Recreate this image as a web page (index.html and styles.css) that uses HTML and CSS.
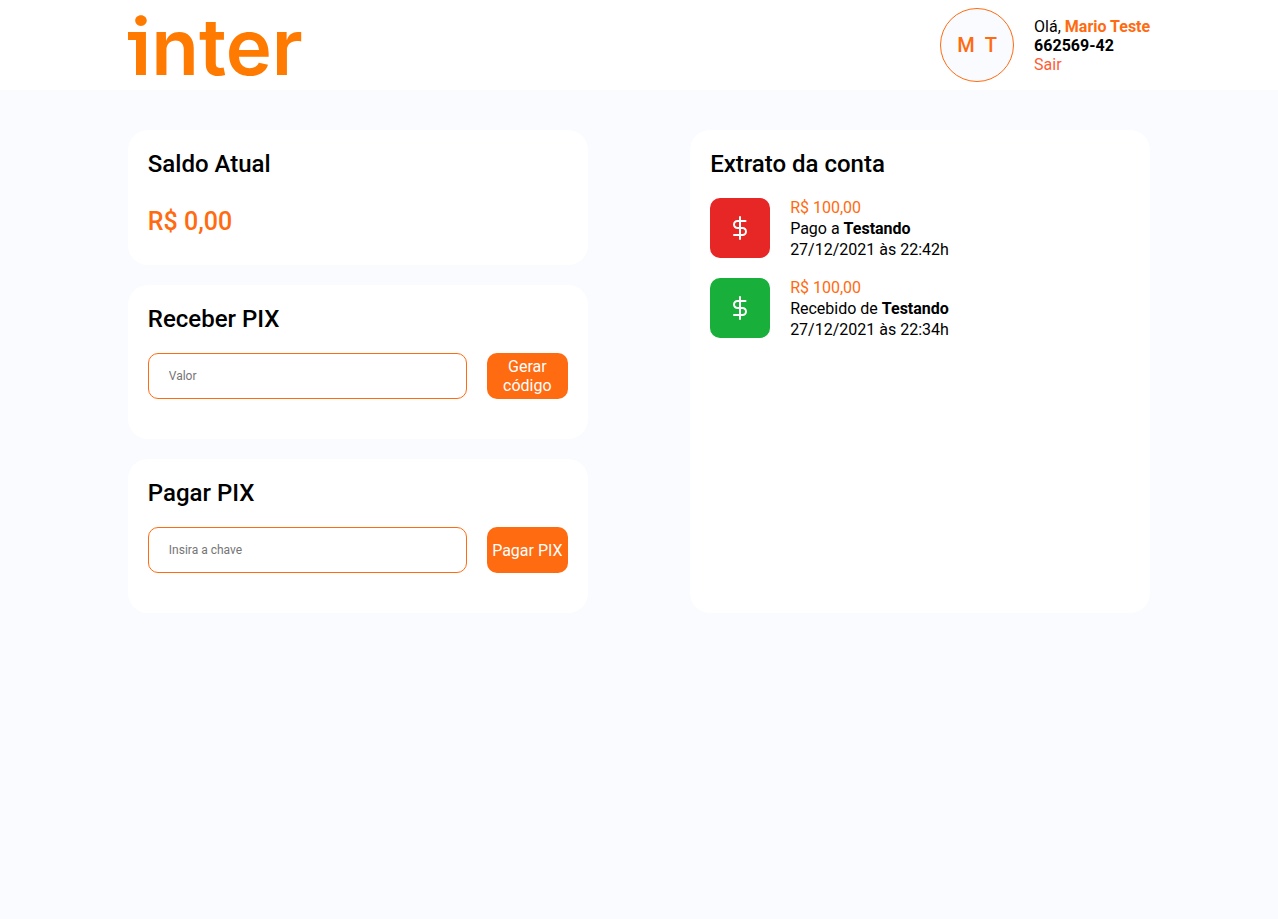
FILE: index.html
```html
<!DOCTYPE html>
<html lang="pt-BR">
<head>
<meta charset="utf-8">
<meta name="viewport" content="width=device-width, initial-scale=1">
<title>Inter</title>
<link rel="stylesheet" href="styles.css">
</head>
<body>
<header class="header">
  <div class="wrapper header-content">
    <div class="logo">inter</div>
    <div class="user">
      <div class="avatar"><span>M</span><span>T</span></div>
      <div class="user-info">
        <p>Olá, <strong class="accent">Mario Teste</strong></p>
        <strong>662569-42</strong>
        <a href="#sair">Sair</a>
      </div>
    </div>
  </div>
</header>
<main class="wrapper dashboard">
  <div class="column">
    <section class="card">
      <h2>Saldo Atual</h2>
      <p class="balance">R$ 0,00</p>
    </section>
    <section class="card">
      <h2>Receber PIX</h2>
      <form class="pix-form">
        <input type="text" placeholder="Valor" aria-label="Valor">
        <button type="button">Gerar código</button>
      </form>
    </section>
    <section class="card">
      <h2>Pagar PIX</h2>
      <form class="pix-form">
        <input type="text" placeholder="Insira a chave" aria-label="Insira a chave">
        <button type="button">Pagar PIX</button>
      </form>
    </section>
  </div>
  <section class="card statement">
    <h2>Extrato da conta</h2>
    <ul class="transactions">
      <li class="transaction">
        <span class="icon paid"><svg viewBox="0 0 24 24" aria-hidden="true"><path d="M12 1v22M17.500 5H9.500a3.500 3.500 0 0 0 0 7h5a3.500 3.500 0 0 1 0 7H6"/></svg></span>
        <div class="details">
          <p class="amount">R$ 100,00</p>
          <p>Pago a <strong>Testando</strong></p>
          <p>27/12/2021 às 22:42h</p>
        </div>
      </li>
      <li class="transaction">
        <span class="icon received"><svg viewBox="0 0 24 24" aria-hidden="true"><path d="M12 1v22M17.500 5H9.500a3.500 3.500 0 0 0 0 7h5a3.500 3.500 0 0 1 0 7H6"/></svg></span>
        <div class="details">
          <p class="amount">R$ 100,00</p>
          <p>Recebido de <strong>Testando</strong></p>
          <p>27/12/2021 às 22:34h</p>
        </div>
      </li>
    </ul>
  </section>
</main>
</body>
</html>
```
FILE: styles.css
```css
* {
  margin: 0;
  padding: 0;
  box-sizing: border-box;
}

body {
  background: #fafbff;
  color: #000;
  font-family: Roboto, "Liberation Sans", sans-serif;
  font-size: 16px;
  font-weight: 400;
  line-height: 19px;
}

strong {
  font-weight: 700;
}

.wrapper {
  width: 80%;
  margin: 0 auto;
}

.header {
  height: 90px;
  background: #fff;
}

.header-content {
  display: flex;
  align-items: center;
  justify-content: space-between;
  height: 100%;
}

.logo {
  position: relative;
  padding: 4px 0 0 3px;
  color: #ff7a00;
  font-family: Inter, sans-serif;
  font-size: 78px;
  font-weight: 600;
  line-height: 96px;
}

/* Left arm of the first letter */
.logo::before {
  content: "";
  position: absolute;
  left: 0;
  top: 37px;
  width: 10px;
  height: 8px;
  background: #ff7a00;
}

.user {
  display: flex;
  align-items: center;
  gap: 20px;
}

.avatar {
  display: flex;
  align-items: center;
  justify-content: center;
  gap: 10px;
  width: 74px;
  height: 74px;
  border: 1px solid #ff6b10;
  border-radius: 50%;
  background: #fafbff;
  color: #ff6b10;
  font-size: 20px;
  font-weight: 500;
}

.user-info {
  display: flex;
  flex-direction: column;
}

.user-info a {
  color: #ff5c35;
  text-decoration: none;
}

.accent {
  color: #ff6b10;
}

.dashboard {
  display: flex;
  justify-content: space-between;
  margin-top: 40px;
}

.column,
.statement {
  width: 45%;
}

.column {
  display: flex;
  flex-direction: column;
  gap: 20px;
}

.card {
  padding: 20px;
  border-radius: 20px;
  background: #fff;
}

.card h2 {
  font-size: 24px;
  font-weight: 500;
  line-height: 28px;
}

.balance {
  margin: 29px 0 8px;
  color: #ff6b10;
  font-size: 25px;
  font-weight: 500;
  line-height: 30px;
}

.pix-form {
  display: grid;
  grid-template-columns: 1fr 81px;
  gap: 20px;
  margin: 20px 0;
}

.pix-form input {
  min-width: 0;
  height: 46px;
  padding: 0 20px;
  border: 1px solid #ff6b10;
  border-radius: 10px;
  background: #fff;
  font-family: inherit;
  font-size: 12px;
}

.pix-form input::placeholder {
  color: #757575;
}

.pix-form button {
  border: 0;
  border-radius: 10px;
  background: #ff6b10;
  color: #fff;
  font-family: inherit;
  font-size: 16px;
  line-height: 19px;
}

.transactions {
  display: grid;
  gap: 20px;
  margin-top: 20px;
  list-style: none;
}

.transaction {
  display: flex;
  align-items: center;
  gap: 20px;
  height: 60px;
  line-height: 21px;
}

.icon {
  display: flex;
  align-items: center;
  justify-content: center;
  width: 60px;
  height: 60px;
  border-radius: 10px;
}

.icon svg {
  width: 24px;
  height: 24px;
  fill: none;
  stroke: #fff;
  stroke-width: 2;
  stroke-linecap: round;
  stroke-linejoin: round;
}

.paid {
  background: #e72626;
}

.received {
  background: #18b03a;
}

.amount {
  color: #ff6b10;
}
```
